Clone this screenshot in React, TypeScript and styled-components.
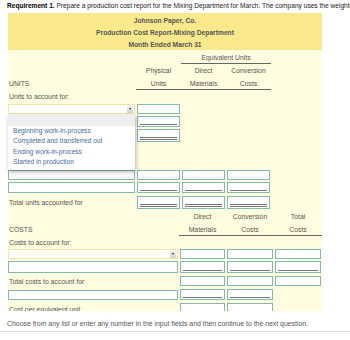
import React from "react";
import styled, { createGlobalStyle } from "styled-components";

const Global = createGlobalStyle`
  html, body { margin: 0; padding: 0; background: #fff; }
  body { font-family: "Liberation Sans", Arial, sans-serif; }
`;

const Page = styled.div`
  width: 350px;
  height: 340px;
  overflow: hidden;
  background: #fff;
`;

const Scroll = styled.div`
  height: 311px;
  overflow: hidden;
`;

const Requirement = styled.div`
  height: 13px;
  line-height: 11px;
  padding-left: 7px;
  font-size: 6.6px;
  color: #222;
  white-space: nowrap;
  overflow: hidden;
  b { color: #000; }
`;

const Report = styled.div`
  width: 314px;
  margin-left: 8px;
  background: #fffde0;
`;

const Banner = styled.div`
  background: #f9e88c;
  padding-top: 1.5px;
  height: 35.5px;
`;

const BannerLine = styled.div`
  height: 12px;
  line-height: 12px;
  text-align: center;
  font-size: 6.7px;
  font-weight: bold;
  color: #555;
`;

const Row = styled.div<{ $cols: string; $h: number }>`
  display: grid;
  grid-template-columns: ${(p) => p.$cols};
  height: ${(p) => p.$h}px;
  align-items: center;
  position: relative;
`;

const Label = styled.div`
  font-size: 6.8px;
  color: #555;
  padding-left: 1px;
  white-space: nowrap;
`;

const Head = styled.div<{ $span?: number; $rule?: boolean }>`
  grid-column: span ${(p) => p.$span ?? 1};
  align-self: stretch;
  display: flex;
  align-items: center;
  justify-content: center;
  font-size: 6.8px;
  color: #555;
  white-space: nowrap;
  border-bottom: 1px solid ${(p) => (p.$rule ? "#666" : "transparent")};
`;

const Field = styled.div<{ $line?: "single" | "double"; $h?: number }>`
  position: relative;
  height: ${(p) => p.$h ?? 10}px;
  margin: 0 1px;
  background: #fff;
  border: 1px solid #86b8b6;
  box-sizing: border-box;
  &::after {
    content: "";
    display: ${(p) => (p.$line ? "block" : "none")};
    position: absolute;
    left: 2px;
    right: 2px;
    bottom: 1px;
    border-bottom: ${(p) => (p.$line === "double" ? "3px double #777" : "1px solid #777")};
  }
`;

const Box = styled.div<{ $h?: number }>`
  height: ${(p) => p.$h ?? 10}px;
  margin-right: 1px;
  background: #fff;
  border: 1px solid #86b8b6;
  box-sizing: border-box;
`;

const SelectWrap = styled.div`
  position: relative;
  margin-right: 1px;
`;

const Select = styled.div`
  height: 10px;
  box-sizing: border-box;
  background: #fff;
  border: 1px solid #f4e59f;
  display: flex;
  justify-content: flex-end;
  align-items: center;
  padding-right: 1px;
`;

const Arrow = styled.span`
  width: 6px;
  height: 7px;
  background: linear-gradient(#eee, #d4d4d4);
  display: flex;
  align-items: center;
  justify-content: center;
  &::before {
    content: "";
    border-left: 1.5px solid transparent;
    border-right: 1.5px solid transparent;
    border-top: 2.5px solid #222;
  }
`;

const Menu = styled.div`
  position: absolute;
  top: 10px;
  left: 0;
  width: 127px;
  background: #fff;
  box-shadow: 1px 2px 4px rgba(0, 0, 0, 0.3);
  padding-bottom: 3px;
  z-index: 2;
`;

const MenuBlank = styled.div`
  height: 12px;
  background: #eeeeee;
`;

const MenuItem = styled.div`
  height: 10.3px;
  line-height: 10.3px;
  padding-left: 5px;
  font-size: 6.6px;
  color: #4a6d9c;
  white-space: nowrap;
`;

const Footer = styled.div`
  padding: 8px 0 2px 7px;
  line-height: 10px;
  font-size: 6.9px;
  color: #555;
  border-bottom: 1px solid #dedede;
  white-space: nowrap;
`;

const U = "128px 45px 45px 45px";
const C = "171px 47px 48px 48px";

const options = [
  "Beginning work-in-process",
  "Completed and transferred out",
  "Ending work-in-process",
  "Started in production",
];

function Dropdown({ open }: { open?: boolean }) {
  return (
    <SelectWrap>
      <Select>
        <Arrow />
      </Select>
      {open && (
        <Menu>
          <MenuBlank />
          {options.map((o) => (
            <MenuItem key={o}>{o}</MenuItem>
          ))}
        </Menu>
      )}
    </SelectWrap>
  );
}

export default function App() {
  return (
    <Page>
      <Global />
      <Scroll>
        <Requirement>
          <b>Requirement 1.</b> Prepare a production cost report for the Mixing Department for
          March. The company uses the weighted-average method.
        </Requirement>
        <Report>
          <Banner>
            <BannerLine>Johnson Paper, Co.</BannerLine>
            <BannerLine>Production Cost Report-Mixing Department</BannerLine>
            <BannerLine>Month Ended March 31</BannerLine>
          </Banner>

          <Row $cols={U} $h={14}>
            <div />
            <div />
            <Head $span={2} $rule style={{ paddingTop: 2 }}>
              Equivalent Units
            </Head>
          </Row>
          <Row $cols={U} $h={13}>
            <div />
            <Head>Physical</Head>
            <Head>Direct</Head>
            <Head>Conversion</Head>
          </Row>
          <Row $cols={U} $h={13}>
            <Label>UNITS</Label>
            <Head $rule>Units</Head>
            <Head $rule>Materials</Head>
            <Head $rule>Costs</Head>
          </Row>
          <Row $cols={U} $h={13}>
            <Label>Units to account for:</Label>
          </Row>
          <Row $cols={U} $h={12} style={{ zIndex: 3 }}>
            <Dropdown open />
            <Field />
          </Row>
          <Row $cols={U} $h={13}>
            <Box $h={11} />
            <Field $line="single" $h={11} />
          </Row>
          <Row $cols={U} $h={14}>
            <div />
            <Field $line="double" $h={13} />
          </Row>
          <Row $cols={U} $h={27} />
          <Row $cols={U} $h={12}>
            <Box />
            <Field />
            <Field />
            <Field />
          </Row>
          <Row $cols={U} $h={13}>
            <Box $h={11} />
            <Field $line="single" $h={11} />
            <Field $line="single" $h={11} />
            <Field $line="single" $h={11} />
          </Row>
          <Row $cols={U} $h={16}>
            <Label>Total units accounted for</Label>
            <Field $line="double" $h={13} />
            <Field $line="double" $h={13} />
            <Field $line="double" $h={13} />
          </Row>

          <Row $cols={C} $h={13}>
            <div />
            <Head>Direct</Head>
            <Head>Conversion</Head>
            <Head>Total</Head>
          </Row>
          <Row $cols={C} $h={13}>
            <Label>COSTS</Label>
            <Head $rule>Materials</Head>
            <Head $rule>Costs</Head>
            <Head $rule>Costs</Head>
          </Row>
          <Row $cols={C} $h={12}>
            <Label>Costs to account for:</Label>
          </Row>
          <Row $cols={C} $h={12}>
            <Dropdown />
            <Field />
            <Field />
            <Field />
          </Row>
          <Row $cols={C} $h={14}>
            <Box $h={12} />
            <Field $line="single" $h={12} />
            <Field $line="single" $h={12} />
            <Field $line="single" $h={12} />
          </Row>
          <Row $cols={C} $h={14}>
            <Label>Total costs to account for</Label>
            <Field />
            <Field />
            <Field />
          </Row>
          <Row $cols={C} $h={13}>
            <Box />
            <Field $line="single" $h={11} />
            <Field $line="single" $h={11} />
          </Row>
          <Row $cols={C} $h={16}>
            <Label>Cost per equivalent unit</Label>
            <Field $h={13} />
            <Field $h={13} />
          </Row>
        </Report>
      </Scroll>
      <Footer>
        Choose from any list or enter any number in the input fields and then continue to the next
        question.
      </Footer>
    </Page>
  );
}
